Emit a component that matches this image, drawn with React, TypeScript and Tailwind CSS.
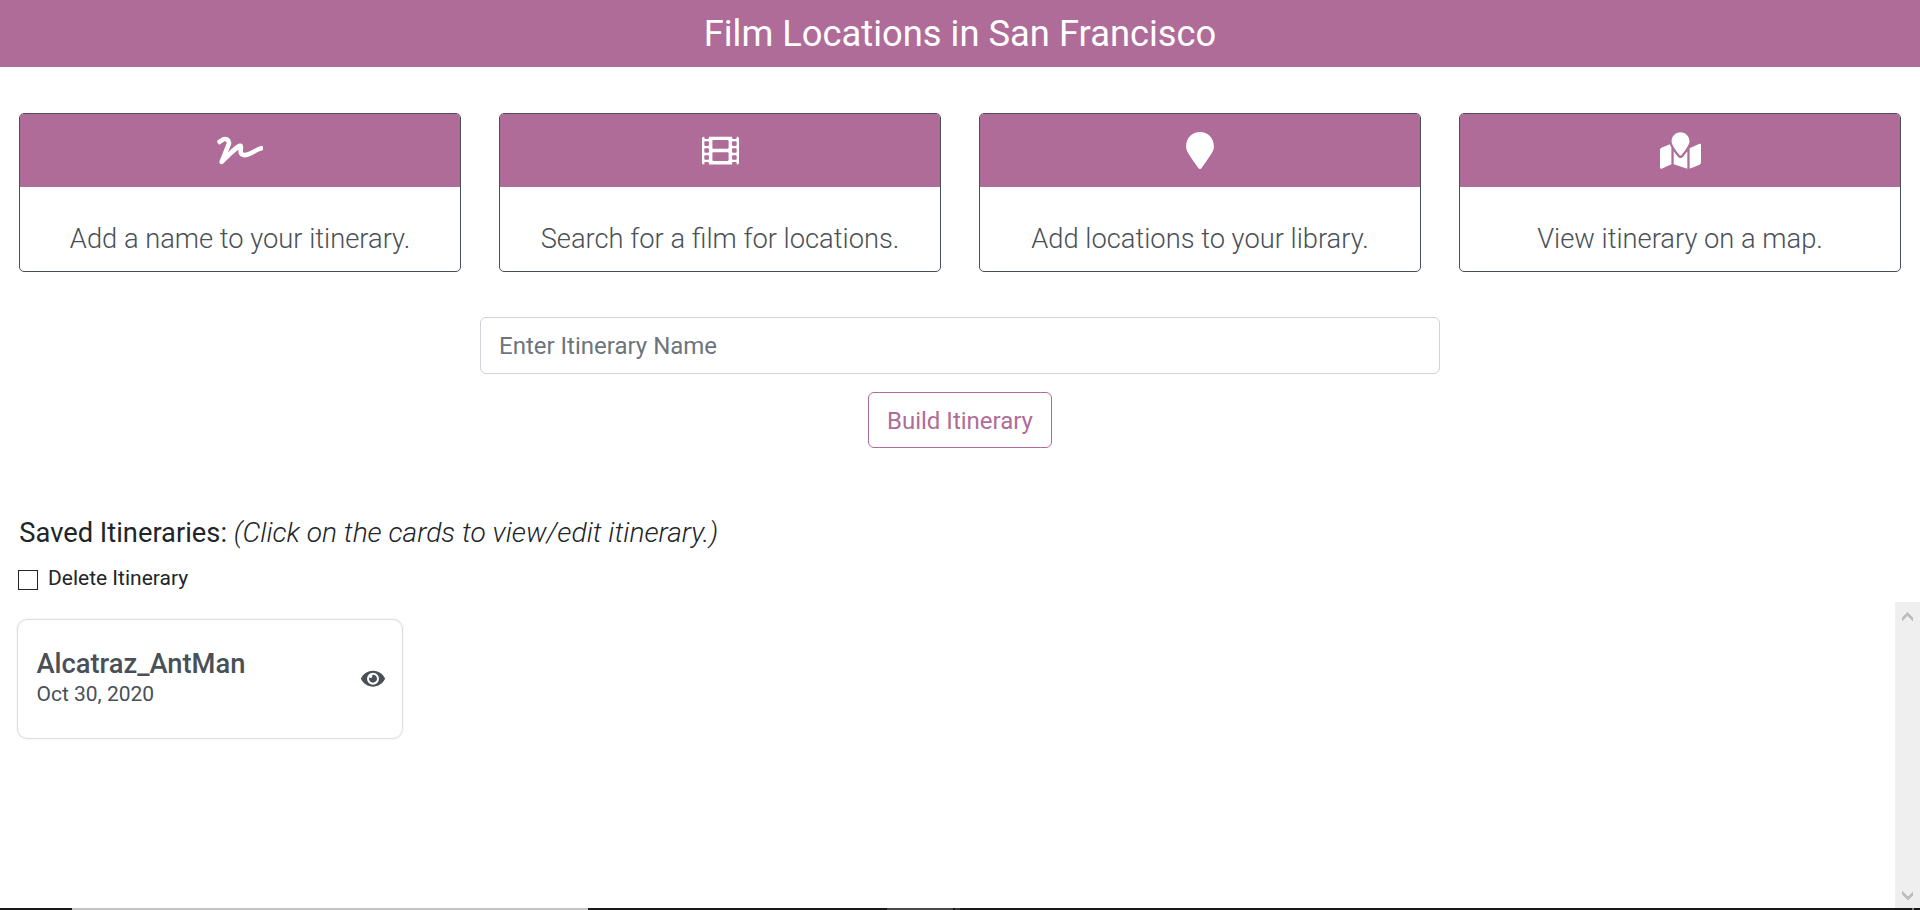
import type { IconType } from "react-icons";
import { FaEye, FaFilm, FaMapMarked, FaMapMarker, FaSignature } from "react-icons/fa";

const steps: { icon: IconType; size: string; text: string }[] = [
  { icon: FaSignature, size: "w-[46px]", text: "Add a name to your itinerary." },
  { icon: FaFilm, size: "w-[37px]", text: "Search for a film for locations." },
  { icon: FaMapMarker, size: "w-[28px]", text: "Add locations to your library." },
  { icon: FaMapMarked, size: "w-[41px]", text: "View itinerary on a map." },
];

function StepCard({ icon: Icon, size, text }: { icon: IconType; size: string; text: string }) {
  return (
    <div className="flex h-[159px] flex-col overflow-hidden rounded-[5px] border border-[#495057] bg-white text-center">
      <div className="flex h-[73px] shrink-0 items-center justify-center bg-[#b06c98] text-white">
        <Icon className={`h-[37px] ${size}`} />
      </div>
      <p className="pt-[36px] text-[27.3px] leading-[33px] font-light text-[#495057]">{text}</p>
    </div>
  );
}

function Chevron({ down = false }: { down?: boolean }) {
  return (
    <svg width="11" height="10" viewBox="0 0 11 10" fill="#bfbfbf" shapeRendering="crispEdges">
      <path d={down ? "M0 0 5.5 5.5 11 0V4L5.5 9.5 0 4Z" : "M0 9.5 5.5 4 11 9.5V5.5L5.5 0 0 5.5Z"} />
    </svg>
  );
}

export default function App() {
  return (
    <div className="flex h-[910px] w-[1920px] flex-col overflow-hidden bg-white font-['Roboto',sans-serif] text-[#212529]">
      <header className="flex h-[67px] shrink-0 items-center justify-center bg-[#b06c98]">
        <h1 className="text-[36.35px] leading-[44px] text-white">Film Locations in San Francisco</h1>
      </header>

      <section className="mt-[46px] grid shrink-0 grid-cols-4 gap-x-[38px] px-[19px]">
        {steps.map((s) => (
          <StepCard key={s.text} icon={s.icon} size={s.size} text={s.text} />
        ))}
      </section>

      <form className="mx-auto mt-[45px] flex w-[960px] shrink-0 flex-col items-center">
        <input
          type="text"
          placeholder="Enter Itinerary Name"
          className="h-[57px] w-full rounded-[6px] border border-[#ced4da] bg-white px-[18px] text-[24px] placeholder:text-[#6c757d]"
        />
        <button
          type="button"
          className="mt-[18px] h-[56px] w-[184px] rounded-[6px] border border-[#b06c98] pt-[2px] text-[24px] leading-none text-[#b06c98]"
        >
          Build Itinerary
        </button>
      </form>

      <section className="mt-[68px] shrink-0 pl-[18px]">
        <h2 className="h-[33px] pl-[1.3px] text-[27.3px] leading-[34px] whitespace-nowrap">
          Saved Itineraries:{" "}
          <em className="text-[28.15px] leading-none font-light">(Click on the cards to view/edit itinerary.)</em>
        </h2>
        <label className="mt-[13px] flex h-[28px] items-start text-[21px] leading-[33px]">
          <input type="checkbox" className="mt-[8px] mr-[10px] size-[20px] shrink-0 appearance-none border border-[#212529] bg-white" />
          Delete Itinerary
        </label>
      </section>

      <main className="mt-[12px] flex min-h-0 flex-1 justify-between">
        <article className="mt-[17px] ml-[17px] flex h-[120px] w-[386px] items-center justify-between rounded-[10px] border border-[#dfdfdf] pr-[17px] pl-[18.5px] text-[#495057] shadow-[inset_0_0_1px_#dcdcdc,0_0_2px_#e4e4e4]">
          <div className="pb-[2px]">
            <h3 className="text-[27.3px] leading-[32px] font-medium">Alcatraz_AntMan</h3>
            <p className="text-[21px] leading-[29px]">Oct 30, 2020</p>
          </div>
          <FaEye className="h-[21.3px] w-[24px]" />
        </article>
        <div className="flex w-[25px] flex-col items-center justify-between bg-[#efefef] pt-[10px] pb-[7px]">
          <Chevron />
          <Chevron down />
        </div>
      </main>

      <footer className="flex h-[2px] shrink-0 bg-[#191919]">
        <div className="ml-[72px] w-[516px] bg-[#c3c3c3]" />
        <div className="ml-[299px] w-[66px] bg-[#494949]" />
        <div className="ml-[2px] w-[5px] bg-[#383838]" />
        <div className="ml-[952px] w-[2px] bg-[#7a7a7a]" />
      </footer>
    </div>
  );
}
